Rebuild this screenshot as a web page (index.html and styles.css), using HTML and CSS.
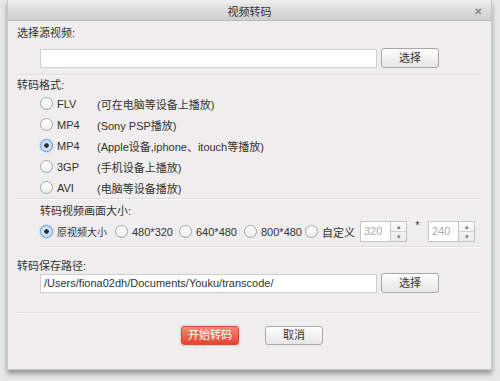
FILE: index.html
```html
<!DOCTYPE html>
<html lang="zh">
<head>
    <meta charset="UTF-8">
    <title>视频转码</title>
    <link rel="stylesheet" href="styles.css">
</head>
<body>
    <div class="ventana">
        <div class="barra">
            <span></span>
            <span class="titulo">视频转码</span>
            <span class="cerrar">&#x2715;</span>
        </div>

        <div class="cuerpo">
            <div class="etiqueta">选择源视频:</div>
            <div class="fila-ruta origen">
                <div class="campo"></div>
                <div class="boton">选择</div>
            </div>
            <div class="linea"></div>

            <div class="etiqueta">转码格式:</div>
            <div class="formatos">
                <div class="opcion"><span class="radio"></span><span class="fmt">FLV</span><span class="desc">(可在电脑等设备上播放)</span></div>
                <div class="opcion"><span class="radio"></span><span class="fmt">MP4</span><span class="desc">(Sony PSP播放)</span></div>
                <div class="opcion"><span class="radio marcado"></span><span class="fmt">MP4</span><span class="desc">(Apple设备,iphone、itouch等播放)</span></div>
                <div class="opcion"><span class="radio"></span><span class="fmt">3GP</span><span class="desc">(手机设备上播放)</span></div>
                <div class="opcion"><span class="radio"></span><span class="fmt">AVI</span><span class="desc">(电脑等设备播放)</span></div>
            </div>
            <div class="linea"></div>

            <div class="tamano">
                <div class="etiqueta">转码视频画面大小:</div>
                <div class="fila-tamano">
                    <span class="radio marcado"></span><span class="txt t1">原视频大小</span>
                    <span class="radio"></span><span class="txt t2">480*320</span>
                    <span class="radio"></span><span class="txt t3">640*480</span>
                    <span class="radio"></span><span class="txt t4">800*480</span>
                    <span class="radio"></span><span class="txt t5">自定义</span>
                    <div class="giro"><span class="valor">320</span><span class="flechas"><i>&#x25B4;</i><i>&#x25BE;</i></span></div>
                    <span class="por">*</span>
                    <div class="giro"><span class="valor">240</span><span class="flechas"><i>&#x25B4;</i><i>&#x25BE;</i></span></div>
                </div>
                <div class="linea"></div>
            </div>

            <div class="etiqueta">转码保存路径:</div>
            <div class="fila-ruta destino">
                <div class="campo">/Users/fiona02dh/Documents/Youku/transcode/</div>
                <div class="boton">选择</div>
            </div>
            <div class="linea"></div>

            <div class="acciones">
                <div class="boton rojo">开始转码</div>
                <div class="boton">取消</div>
            </div>
        </div>
    </div>
</body>
</html>
```

FILE: styles.css
```css
* {
    margin: 0;
    padding: 0;
    box-sizing: border-box;
}

body {
    background: #e9e8e9;
    font-family: "Liberation Sans", "Noto Sans CJK SC", sans-serif;
    font-size: 11px;
    color: #333;
    height: 381px;
    overflow: hidden;
}

.ventana {
    width: 485px;
    height: 370px;
    margin-left: 7px;
    background: #efeded;
    border: 1px solid #c9c9c9;
    border-top: none;
    box-shadow: 0 4px 5px rgba(0, 0, 0, 0.35);
}

/* Barra de titulo */
.barra {
    height: 21px;
    display: grid;
    grid-template-columns: 40px 1fr 40px;
    align-items: center;
    background: linear-gradient(#f0f0f0, #e2e2e2 30%, #cfcfcf);
    border-bottom: 1px solid #b9b9b9;
}

.titulo {
    text-align: center;
    font-size: 11px;
    color: #333;
    padding-top: 2px;
}

.cerrar {
    text-align: right;
    padding-right: 9px;
    padding-top: 2px;
    color: #888;
    font-size: 10px;
    font-weight: bold;
}

.cuerpo {
    padding: 5px 8px 0 9px;
}

.etiqueta {
    height: 14px;
    line-height: 14px;
}

.linea {
    height: 2px;
    background: #dedcdc;
    border-bottom: 1px solid #fbfbfb;
    margin-right: 2px;
}

.fila-ruta {
    display: flex;
    padding-left: 23px;
    gap: 4px;
    height: 20px;
    align-items: center;
}

.fila-ruta.origen {
    margin-top: 8px;
    margin-bottom: 6px;
}

.fila-ruta.origen + .linea {
    margin-bottom: 2px;
}

.fila-ruta.destino {
    margin-top: 0;
    margin-bottom: 19px;
}

.campo {
    width: 337px;
    height: 19px;
    background: #fff;
    border: 1px solid #cfcfcf;
    padding-left: 3px;
    line-height: 17px;
    color: #333;
}

.boton {
    width: 58px;
    height: 20px;
    border: 1px solid #a8a8a8;
    border-radius: 3px;
    background: linear-gradient(#fdfdfd, #e6e6e6);
    text-align: center;
    line-height: 18px;
    color: #333;
}

.formatos {
    padding-left: 23px;
    margin-top: 1px;
}

.opcion {
    height: 21px;
    display: flex;
    align-items: center;
}

.radio {
    width: 13px;
    height: 13px;
    border-radius: 50%;
    border: 1px solid #a5a5a5;
    background: linear-gradient(#ffffff, #ececec);
    flex: none;
}

.radio.marcado {
    border-color: #6a9ed8;
    background: radial-gradient(circle, #2a2a2a 0 2px, #d7e8fa 2.5px, #a9cdf3);
    box-shadow: 0 0 2px #7fb2ea;
}

.fmt {
    width: 40px;
    margin-left: 4px;
}

.desc {
    white-space: nowrap;
}

.tamano {
    padding-left: 23px;
    margin-top: 4px;
}

.fila-tamano {
    height: 21px;
    margin-top: 3px;
    margin-bottom: 4px;
    display: flex;
    align-items: center;
}

.fila-tamano > * {
    flex: none;
}

.txt {
    margin-left: 4px;
    white-space: nowrap;
}

.t1 { width: 58px; font-size: 10px; }
.t2 { width: 47px; }
.t3 { width: 48px; }
.t4 { width: 44px; }
.t5 { width: 38px; }

.giro {
    display: flex;
    width: 47px;
    height: 21px;
    border: 1px solid #c4c4c4;
    background: #fff;
}

.valor {
    flex: 1;
    color: #aaa;
    padding-left: 3px;
    line-height: 19px;
}

.flechas {
    width: 16px;
    border-left: 1px solid #c4c4c4;
    display: flex;
    flex-direction: column;
    background: linear-gradient(#fafafa, #ececec);
}

.flechas i {
    flex: 1;
    font-style: normal;
    font-size: 7px;
    color: #777;
    text-align: center;
    line-height: 9px;
}

.flechas i + i {
    border-top: 1px solid #d0d0d0;
}

.por {
    width: 21px;
    text-align: center;
    align-self: flex-start;
    margin-top: -2px;
}

.tamano .linea {
    margin-bottom: 11px;
}

.acciones {
    display: flex;
    justify-content: center;
    gap: 26px;
    margin-top: 12px;
    padding-left: 4px;
}

.acciones .boton {
    height: 19px;
    line-height: 17px;
}

.boton.rojo {
    background: linear-gradient(#f58a78, #e2452f);
    border-color: #d44a35;
    color: #fff;
    box-shadow: 0 0 2px rgba(220, 80, 60, 0.6);
}
```
